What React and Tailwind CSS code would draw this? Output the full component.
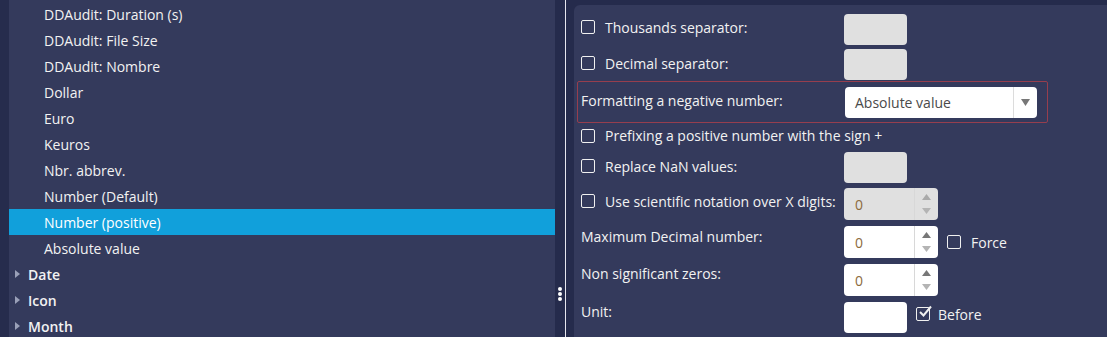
import React from "react";

const items = [
  "DDAudit: Duration (s)",
  "DDAudit: File Size",
  "DDAudit: Nombre",
  "Dollar",
  "Euro",
  "Keuros",
  "Nbr. abbrev.",
  "Number (Default)",
  "Number (positive)",
  "Absolute value",
];

const groups = ["Date", "Icon", "Month"];

const Check = ({ checked }) => (
  <span className="relative inline-block w-[14px] h-[14px] border-[1.5px] border-[#f0f0f0] rounded-[2px] shrink-0">
    {checked && (
      <svg
        className="absolute -top-[3px] left-[1px]"
        width="14"
        height="14"
        viewBox="0 0 14 14"
        fill="none"
      >
        <path d="M2 7 L5.5 10.5 L13 1.5" stroke="#f0f0f0" strokeWidth="2" />
      </svg>
    )}
  </span>
);

const TextBox = ({ disabled, className = "" }) => (
  <div
    className={`w-[63px] h-[31px] rounded-[4px] ${
      disabled ? "bg-[#e0e0e0]" : "bg-white"
    } ${className}`}
  ></div>
);

const NumberBox = ({ disabled }) => (
  <div
    className={`w-[94px] h-[32px] rounded-[4px] flex ${
      disabled ? "bg-[#e0e0e0]" : "bg-white"
    }`}
  >
    <div className="flex-1 flex items-center pl-[11px] text-[#8c6a3c]">0</div>
    <div className="w-[24px] border-l border-[#d8d8d8] flex flex-col items-center justify-center gap-[8px]">
      <svg width="9" height="6" viewBox="0 0 9 6">
        <path d="M4.5 0 L9 6 L0 6 Z" fill={disabled ? "#aaaaaa" : "#777777"} />
      </svg>
      <svg width="9" height="6" viewBox="0 0 9 6">
        <path d="M0 0 L9 0 L4.5 6 Z" fill="#b4b4b4" />
      </svg>
    </div>
  </div>
);

const App = () => {
  return (
    <div
      className="flex h-[337px] w-[1107px] overflow-hidden bg-[#252b4c] text-[14px] text-[#f2f2f2]"
      style={{ fontFamily: '"Open Sans", "Noto Sans", sans-serif' }}
    >
      {/* left strip */}
      <div className="w-[9px] shrink-0 bg-[#262c4d]"></div>

      {/* tree list */}
      <div className="w-[546px] shrink-0 bg-[#343a5c] flex flex-col pt-[1px] overflow-hidden">
        {items.map((item) => (
          <div
            key={item}
            className={`h-[26px] shrink-0 flex items-center pl-[35px] ${
              item === "Number (positive)" ? "bg-[#11a0db] text-white" : ""
            }`}
          >
            {item}
          </div>
        ))}
        {groups.map((g) => (
          <div key={g} className="h-[26px] shrink-0 flex items-center pl-[6px] font-semibold">
            <svg width="5" height="8" viewBox="0 0 5 8" className="mr-[8px]">
              <path d="M0 0 L5 4 L0 8 Z" fill="#9aa0b8" />
            </svg>
            {g}
          </div>
        ))}
      </div>

      {/* splitter */}
      <div className="w-[19px] shrink-0 flex bg-[#252b4c]">
        <div className="w-[10px] flex flex-col items-center pt-[287px] gap-[1px]">
          <span className="w-[4px] h-[4px] rounded-full bg-white"></span>
          <span className="w-[4px] h-[4px] rounded-full bg-white"></span>
          <span className="w-[4px] h-[4px] rounded-full bg-white"></span>
        </div>
        <div className="w-[1px] bg-[#e6e6ee]"></div>
      </div>

      {/* settings panel */}
      <div className="flex-1 pt-[5px] bg-[#252b4c]">
        <div className="h-full bg-[#343a5c] rounded-tl-[6px] pl-[7px] pt-[9px]">
          <div className="flex items-start h-[31px]">
            <div className="w-[263px] flex items-center pt-[3px] h-[20px] box-content">
              <Check />
              <span className="ml-[10px]">Thousands separator:</span>
            </div>
            <TextBox disabled />
          </div>

          <div className="flex items-start h-[31px] mt-[4px]">
            <div className="w-[263px] flex items-center pt-[4px] h-[20px] box-content">
              <Check />
              <span className="ml-[10px]">Decimal separator:</span>
            </div>
            <TextBox disabled />
          </div>

          <div className="flex items-center h-[42px] mt-[1px] -ml-[4px] pl-[3px] w-[471px] border border-[#963e4e] rounded-[2px]">
            <div className="w-[264px] pb-[4px]">Formatting a negative number:</div>
            <div className="w-[192px] h-[31px] bg-white rounded-[4px] flex">
              <div className="flex-1 flex items-center pl-[10px] text-[#4a4a4a]">
                Absolute value
              </div>
              <div className="w-[24px] border-l border-[#dcdcdc] flex items-center justify-center">
                <svg width="9" height="7" viewBox="0 0 9 7">
                  <path d="M0 0 L9 0 L4.5 7 Z" fill="#777777" />
                </svg>
              </div>
            </div>
          </div>

          <div className="flex items-center h-[25px]">
            <Check />
            <span className="ml-[10px]">Prefixing a positive number with the sign +</span>
          </div>

          <div className="flex items-start h-[31px] mt-[4px]">
            <div className="w-[263px] flex items-center pt-[4px] h-[20px] box-content">
              <Check />
              <span className="ml-[10px]">Replace NaN values:</span>
            </div>
            <TextBox disabled />
          </div>

          <div className="flex items-start h-[32px] mt-[5px]">
            <div className="w-[263px] flex items-center pt-[3px] h-[20px] box-content">
              <Check />
              <span className="ml-[10px]">Use scientific notation over X digits:</span>
            </div>
            <NumberBox disabled />
          </div>

          <div className="flex items-start h-[32px] mt-[6px]">
            <div className="w-[263px] pt-[1px] leading-5">Maximum Decimal number:</div>
            <NumberBox />
            <div className="flex items-center h-[32px] ml-[9px]">
              <Check />
              <span className="ml-[10px]">Force</span>
            </div>
          </div>

          <div className="flex items-start h-[32px] mt-[6px]">
            <div className="w-[263px] leading-5">Non significant zeros:</div>
            <NumberBox />
          </div>

          <div className="flex items-start h-[31px] mt-[6px]">
            <div className="w-[263px] leading-5">Unit:</div>
            <TextBox />
            <div className="flex items-center h-[24px] ml-[9px]">
              <Check checked />
              <span className="ml-[8px]">Before</span>
            </div>
          </div>
        </div>
      </div>
    </div>
  );
};

export default App;
